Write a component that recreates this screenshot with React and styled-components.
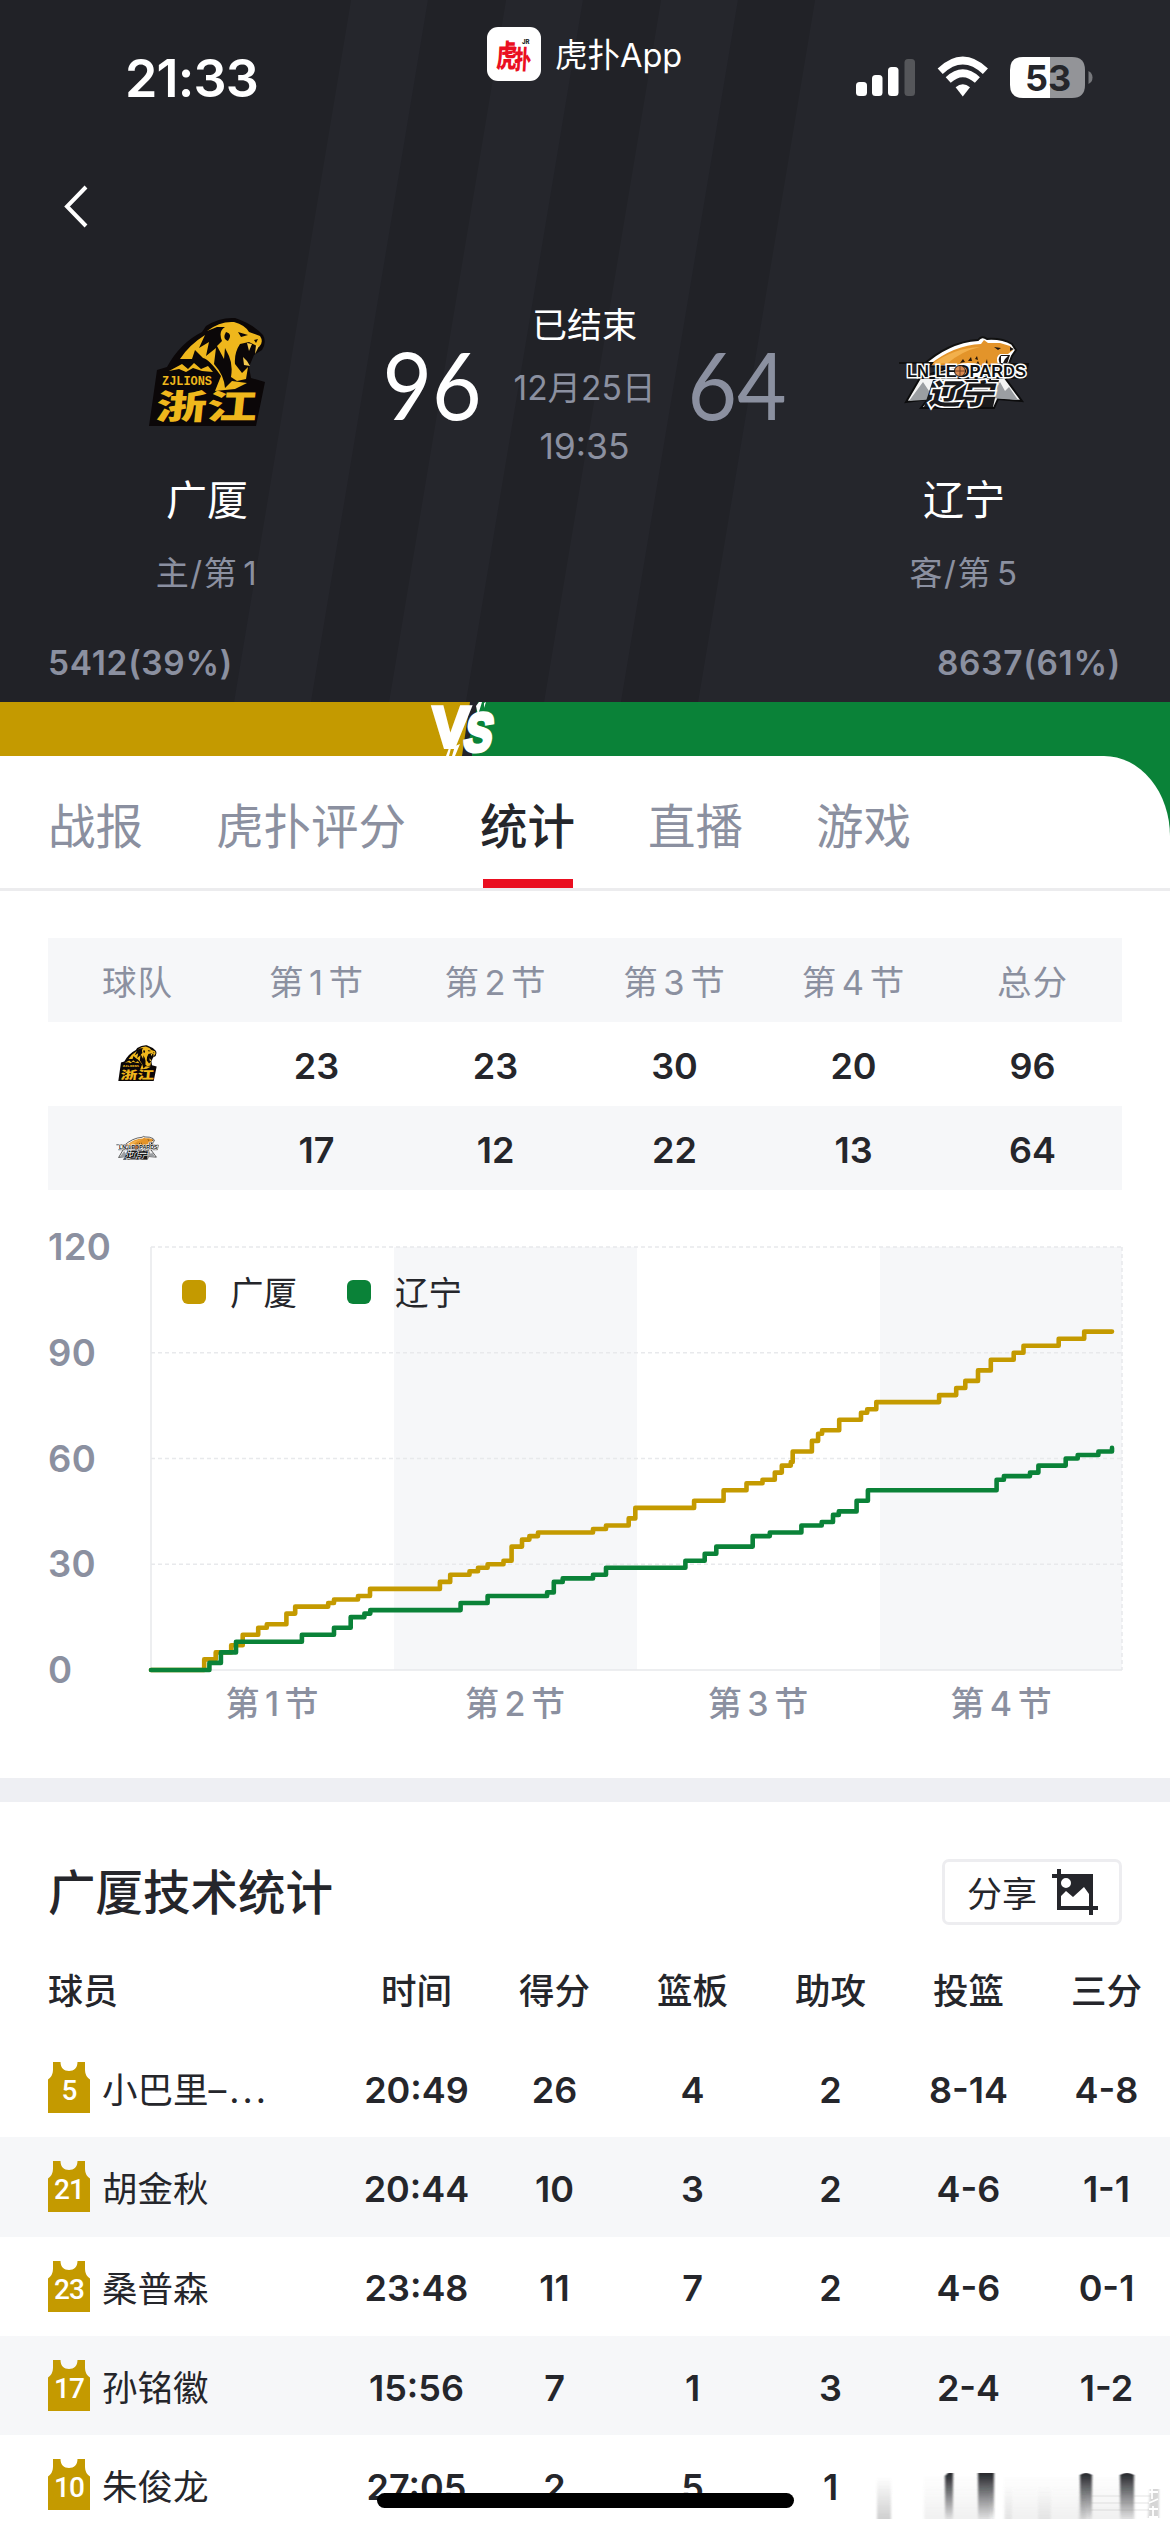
import styled, { createGlobalStyle } from "styled-components";

const GOLD = "#c49a00";
const GREEN = "#0a8238";
const GREY = "#8b90a0";
const INK = "#25262b";

const quarters = ["第1节", "第2节", "第3节", "第4节"];

const quarterScores = [
  { team: "zj", scores: [23, 23, 30, 20, 96] },
  { team: "ln", scores: [17, 12, 22, 13, 64] },
];

const tabs = ["战报", "虎扑评分", "统计", "直播", "游戏"];

const statColumns = ["时间", "得分", "篮板", "助攻", "投篮", "三分"];

const players = [
  { no: 5, name: "小巴里", tail: "–...", stats: ["20:49", "26", "4", "2", "8-14", "4-8"] },
  { no: 21, name: "胡金秋", stats: ["20:44", "10", "3", "2", "4-6", "1-1"] },
  { no: 23, name: "桑普森", stats: ["23:48", "11", "7", "2", "4-6", "0-1"] },
  { no: 17, name: "孙铭徽", stats: ["15:56", "7", "1", "3", "2-4", "1-2"] },
  { no: 10, name: "朱俊龙", stats: ["27:05", "2", "5", "1", "", ""] },
];

// [x, score] : the score changes at x
const goldSteps = [
  [151, 0], [204.2, 3], [215.7, 5], [231.2, 7], [242.7, 10], [258.2, 12], [266.8, 13], [286.4, 16], [295.2, 18],
  [328.2, 19], [334, 20], [358, 21], [370, 23], [439.9, 25], [450.2, 27], [469.5, 28], [478, 29], [487.6, 30],
  [503.5, 31], [511.6, 35], [522, 37], [529.4, 38], [538, 39], [593, 40], [606, 41], [628.7, 43], [635.3, 46],
  [694.1, 48], [723.6, 51], [746.5, 53], [762.5, 54], [774.8, 56], [781.8, 58], [790.8, 59], [792.7, 62],
  [811.9, 65], [818.1, 67], [822.1, 68], [839.2, 71], [861, 73], [867.2, 74], [876.3, 76], [939.1, 78],
  [956.2, 80], [965.3, 82], [978, 85], [990.8, 88], [1013.7, 90], [1023.5, 92], [1058.7, 94], [1084.2, 96],
  [1112, 96],
];
const greenSteps = [
  [151, 0], [209.4, 2], [220.9, 5], [236, 8], [301.9, 10], [334, 12], [350.7, 15], [364.4, 16], [370.3, 17],
  [460.6, 19], [487.6, 21], [547.1, 22], [553.8, 25], [562.7, 26], [593, 27], [606, 29], [685.4, 31],
  [704.7, 33], [716.3, 35], [752.7, 38], [769.8, 39], [801.4, 41], [821.7, 42], [833, 44], [838.8, 45],
  [856.6, 48], [867.9, 51], [996.6, 54], [1003.9, 55], [1030, 56], [1038.4, 58], [1065.7, 60], [1077.7, 61],
  [1098.4, 62], [1112, 63],
];

const stepPath = (steps) =>
  steps
    .map(([x, v], i) => {
      const px = x - 147;
      const py = (427 - v * 3.525).toFixed(1);
      return i === 0 ? `M${px} ${py}` : `H${px.toFixed(1)} V${py}`;
    })
    .join(" ");

// 第1节 -> 第 + <Digit>1</Digit> + 节
const withDigits = (text) => text.split(/(\d+)/).map((part, i) => (i % 2 ? <Digit key={i}>{part}</Digit> : part));

const LionLogo = ({ width }) => (
  <LogoSvg width={width} viewBox="0 0 118 112">
    <path
      d="M1 109 L9 53 L19 50 Q32 26 54 15 L58 9 Q72 0 87 1 Q105 7 115 18 Q119 25 114 33 L106 38 L101 50 L103 61 L117 65 L108 109 Z"
      fill="#0b0708"
    />
    <path
      d="M32 42 Q41 28 57 18 L51 31 L61 25 L58 39 L68 31 L66 47 Q76 58 77 71 L84 64 L99 66 L87 72 L67 74 L73 59 Q61 42 55 41 L47 33 L44 42 Z"
      fill="#efb71c"
    />
    <path
      d="M59 14 Q72 4 86 5 Q97 8 101 15 L112 19 Q116 25 111 30 L101 25 L92 27 Q86 36 87 47 L94 56 L100 50 L98 62 L89 64 L83 60 Q85 48 81 39 L77 31 L76 42 L69 29 L74 24 Q70 14 77 10 L69 10 Z"
      fill="#efb71c"
    />
    <path d="M78 15 Q85 17 80 24 Q74 22 78 15 M90 15 L100 18 L93 20 Z M106 23 L110 22 L108 26 Z" fill="#0b0708" />
    <path d="M99 26 L101 34 L104 27 Z M108 28 L107 37 L111 29 Z M95 40 L96 48 L102 49 L99 44 Z" fill="#f4c94d" />
    <path d="M21 54 L34 47 L40 52 L46 46 L53 52 L60 49 L65 55 L54 54 L45 51 L38 55 L31 52 Z" fill="#efb71c" />
    <text x="14" y="68" fontFamily="Liberation Mono" fontWeight="700" fontSize="12.5" textLength="50" lengthAdjust="spacingAndGlyphs" fill="#efb71c">
      ZJLIONS
    </text>
    <g transform="translate(7 102) skewX(-6)">
      <text x="0" y="0" fontFamily="Noto Sans CJK SC" fontWeight="900" fontSize="34" textLength="101" lengthAdjust="spacingAndGlyphs" fill="#efb71c">
        浙江
      </text>
    </g>
  </LogoSvg>
);

const LeopardLogo = ({ width }) => (
  <LogoSvg width={width} viewBox="0 0 132 74">
    <path d="M8 66 L22 42 L52 31 L104 38 L124 65 L100 63 L96 72 L23 72 L30 63 Z" fill="#f4f4f4" stroke="#0c0c0d" strokeWidth="2" />
    <path d="M11 65 L25 46 L31 55 L35 49 L39 63 Z M92 62 L102 46 L107 55 L111 51 L120 64 Z" fill="#9b9ea2" />
    <path
      d="M24 30 Q50 6 80 4 Q84 -1 89 3 Q104 2 114 8 L118 14 L114 20 L110 30 L91 30 L92 43 L78 31 Z"
      fill="#fff"
      stroke="#111"
      strokeWidth="2"
    />
    <path d="M31 29 Q56 9 83 8 L86 4 L90 7 L102 7 L112 10 L115 14 L110 18 L102 18 Q97 21 100 28 L94 28 L92 39 L82 29 Q70 25 58 29 Z" fill="#e3942a" />
    <path d="M34 28 Q56 12 82 11 Q64 15 50 27 Z" fill="#f2b04c" />
    <path d="M62 27 l3 -4 2 3z M70 25 l3 -4 1 4z M77 23 l2 -3 1 4z M86 31 l3 -8 1 7z M78 28 l2 -3 2 4z M88 36 l2 -6 1 6z" fill="#241408" />
    <path d="M96 11 L103 12 L100 14 Z M112 11 L116 13 L112 15 Z M103 19 L112 19 L109 28 L102 28 Q99 22 103 19 Z" fill="#1a1412" />
    <path d="M103 20 L110 20 L107 23 L105 27 L103 27 Z" fill="#fff" />
    <path d="M1 27 H34 L30 33 M104 28 H130 L127 42 H8 Z" fill="none" stroke="#111" strokeWidth="2" />
    <text
      x="9"
      y="41"
      fontFamily="Liberation Sans"
      fontWeight="700"
      fontSize="16.5"
      wordSpacing="2"
      textLength="119"
      lengthAdjust="spacingAndGlyphs"
      fill="#111"
      stroke="#fff"
      strokeWidth="3"
      paintOrder="stroke"
    >
      LN LEOPARDS
    </text>
    <circle cx="62" cy="35" r="5.5" fill="#d98a51" stroke="#111" strokeWidth="1" />
    <path d="M57 35 H67 M62 30 V40" stroke="#603117" strokeWidth="0.8" />
    <path d="M35 44 H101 L95 71 H26 Z" fill="#1a1a1c" />
    <g transform="translate(30 68) skewX(-14)">
      <text
        x="0"
        y="0"
        fontFamily="Noto Sans CJK SC"
        fontWeight="900"
        fontSize="28"
        textLength="66"
        lengthAdjust="spacingAndGlyphs"
        fill="#1a1a1c"
        stroke="#fff"
        strokeWidth="3.2"
        paintOrder="stroke"
      >
        辽宁
      </text>
    </g>
  </LogoSvg>
);

const HupuLogo = () => (
  <HupuBadge>
    <svg width="54" height="54" viewBox="0 0 54 54">
      <g transform="translate(9 40) skewX(-3) scale(0.66 1)">
        <text x="0" y="0" fontFamily="Noto Sans CJK SC" fontWeight="900" fontSize="31" fill="#ea1022">
          虎
        </text>
        <text x="27" y="2" fontFamily="Noto Sans CJK SC" fontWeight="900" fontSize="26" fill="#ea1022">
          扑
        </text>
      </g>
      <text x="35" y="17" fontFamily="Inter" fontWeight="800" fontSize="6" fill="#222">
        JR
      </text>
    </svg>
  </HupuBadge>
);

const StatusIcons = () => (
  <svg width="240" height="48" viewBox="0 0 240 48">
    <rect x="3" y="29" width="11" height="14" rx="3.5" fill="#fff" />
    <rect x="19" y="22" width="10.5" height="21" rx="3.5" fill="#fff" />
    <rect x="35" y="14" width="10.5" height="29" rx="3.5" fill="#fff" />
    <rect x="51.5" y="6" width="10.5" height="37" rx="3.5" fill="#55565a" />
    <g fill="none" stroke="#fff" strokeWidth="7.4">
      <path d="M87.2 18.2 Q109.8 -3.2 132.4 18.2" />
      <path d="M95.2 27 Q109.8 13.5 124.4 27" />
    </g>
    <path d="M102.6 34.2 Q109.8 28.5 117 34.2 L109.8 43.6 Z" fill="#fff" />
    <path d="M170 4 H197 V45 H170 Q157 45 157 32 V17 Q157 4 170 4 Z" fill="#fff" />
    <path d="M197 4 H219 Q232 4 232 17 V32 Q232 45 219 45 H197 Z" fill="#939498" />
    <path d="M235.5 18 Q239.5 20 239.5 24.5 Q239.5 29 235.5 31 Z" fill="#77787c" />
    <text x="195" y="37.5" textAnchor="middle" fontFamily="Inter" fontWeight="700" fontSize="36" fill="#25262b">
      53
    </text>
  </svg>
);

const VsMark = () => (
  <VsSvg width="82" height="54" viewBox="0 0 82 54">
    <path d="M0 0 H48 L40 54 H0 Z" fill={GOLD} />
    <path d="M46 0 L58 0 L52 54 H38 Z" fill="#22232a" />
    <path d="M54 0 H82 V54 H48 L48 48 L42 48 L50 20 Z" fill={GREEN} />
    <path d="M52 4 L55 0 L58 0 L54 13 Z M60 1 L62 0 L60 6 Z M22 54 L25 46 L27 46 L25 54 Z M28 54 L31 44 L36 42 L31 54 Z" fill="#fff" />
    <g fill="#fff" stroke="#fff" fontFamily="Liberation Sans" fontWeight="700">
      <text transform="translate(7 45) skewX(-3)" fontSize="58" strokeWidth="4" textLength="37" lengthAdjust="spacingAndGlyphs">
        V
      </text>
      <text transform="translate(38 49) skewX(-10)" fontSize="54" strokeWidth="4" textLength="28" lengthAdjust="spacingAndGlyphs">
        S
      </text>
    </g>
  </VsSvg>
);

const ShareIcon = () => (
  <svg width="46" height="46" viewBox="0 0 46 46" fill={INK}>
    <path
      fillRule="evenodd"
      d="M5 0 H9 V5 H41 V37 H46 V41 H41 V46 H37 V41 H5 V9 H0 V5 H5 Z M9 27 V37 H37 V25 L32 18 L21 28 L14 22 Z M14 9 A5 5 0 1 0 14 19 A5 5 0 1 0 14 9 Z"
    />
  </svg>
);

const Jersey = ({ no }) => (
  <JerseyBox>
    <svg width="42" height="51" viewBox="0 0 42 51">
      <path
        d="M5 0 H12.5 C12.5 6 16 9 21 9 C26 9 29.5 6 29.5 0 H37 V7 C37 12 38.5 15 42 17.5 V51 H0 V17.5 C3.5 15 5 12 5 7 Z"
        fill={GOLD}
      />
    </svg>
    <JerseyNo>{no}</JerseyNo>
  </JerseyBox>
);

const ScoreChart = () => (
  <ChartRow>
    <YAxis>
      {[120, 90, 60, 30, 0].map((v) => (
        <span key={v}>{v}</span>
      ))}
    </YAxis>
    <Plot>
      <svg width="979" height="431" viewBox="0 0 979 431">
        <rect x="247" y="4" width="243" height="423" fill="#f6f7f9" />
        <rect x="733" y="4" width="242" height="423" fill="#f6f7f9" />
        <g stroke="#e8e9ec" strokeWidth="1.5" fill="none">
          <path d="M4 4 H975 M4 109.7 H975 M4 215.5 H975 M4 321.2 H975 M975 4 V427" strokeDasharray="4 3" />
          <path d="M4 4 V427 H975" />
        </g>
        <g fill="none" strokeWidth="4.6" strokeLinecap="round" strokeLinejoin="round">
          <path d={stepPath(goldSteps)} stroke={GOLD} />
          <path d={stepPath(greenSteps)} stroke={GREEN} />
        </g>
      </svg>
      <Legend>
        <LegendDot $color={GOLD} />
        <LegendName>广厦</LegendName>
        <LegendDot $color={GREEN} />
        <LegendName>辽宁</LegendName>
      </Legend>
      <XAxis>
        {quarters.map((q) => (
          <span key={q}>{withDigits(q)}</span>
        ))}
      </XAxis>
    </Plot>
  </ChartRow>
);

export default function App() {
  return (
    <Page>
      <GlobalStyle />
      <Header>
        <Stripes viewBox="0 0 1170 702" preserveAspectRatio="none">
          <path
            d="M351 0 H428 L311 702 H234 Z M506 0 H583 L466 702 H389 Z M661 0 H738 L621 702 H544 Z M815 0 H1170 V702 H698 Z"
            fill="#25262c"
          />
        </Stripes>
        <StatusBar>
          <Clock>21:33</Clock>
          <Brand>
            <HupuLogo />
            <BrandName>虎扑App</BrandName>
          </Brand>
          <StatusRight>
            <StatusIcons />
          </StatusRight>
        </StatusBar>
        <NavBar>
          <svg width="26" height="46" viewBox="0 0 26 46">
            <path d="M24 3 L5 22.5 L24 42" fill="none" stroke="#fff" strokeWidth="4" />
          </svg>
        </NavBar>
        <Match>
          <Team>
            <LogoBox>
              <LionLogo width={118} />
            </LogoBox>
            <TeamName>广厦</TeamName>
            <TeamRank>主/第<RankNo>1</RankNo></TeamRank>
          </Team>
          <Score $color="#fff">96</Score>
          <MatchInfo>
            <MatchState>已结束</MatchState>
            <MatchDate>12月25日</MatchDate>
            <MatchTime>19:35</MatchTime>
          </MatchInfo>
          <Score $color={GREY}>64</Score>
          <Team $away>
            <LogoBox>
              <LeopardLogo width={132} />
            </LogoBox>
            <TeamName>辽宁</TeamName>
            <TeamRank>客/第<RankNo>5</RankNo></TeamRank>
          </Team>
        </Match>
        <Votes>
          <span>5412(39%)</span>
          <span>8637(61%)</span>
        </Votes>
      </Header>
      <VoteBar>
        <VoteHome />
        <VsMark />
        <VoteAway />
      </VoteBar>
      <SheetBack>
        <TabBar>
          {tabs.map((t) => (
            <Tab key={t} $active={t === "统计"}>
              {t}
            </Tab>
          ))}
        </TabBar>
      </SheetBack>
      <Summary>
        <QuarterRow $shade>
          {["球队", ...quarters, "总分"].map((h) => (
            <QuarterHead key={h}>{withDigits(h)}</QuarterHead>
          ))}
        </QuarterRow>
        {quarterScores.map((row, idx) => (
          <QuarterRow key={row.team} $shade={idx % 2 === 1}>
            <QuarterLogo>{row.team === "zj" ? <LionLogo width={39} /> : <LeopardLogo width={43} />}</QuarterLogo>
            {row.scores.map((s, i) => (
              <QuarterCell key={i}>{s}</QuarterCell>
            ))}
          </QuarterRow>
        ))}
        <ScoreChart />
      </Summary>
      <Divider />
      <StatsHeader>
        <StatsTitle>广厦技术统计</StatsTitle>
        <ShareButton>
          分享
          <ShareIcon />
        </ShareButton>
      </StatsHeader>
      <StatsHeadRow>
        <PlayerCell>球员</PlayerCell>
        {statColumns.map((c) => (
          <StatHead key={c}>{c}</StatHead>
        ))}
      </StatsHeadRow>
      {players.map((p, idx) => (
        <StatsRow key={p.no} $shade={idx % 2 === 1}>
          <PlayerCell>
            <Jersey no={p.no} />
            <PlayerName>
              {p.name}
              {p.tail && <NameTail>{p.tail}</NameTail>}
            </PlayerName>
          </PlayerCell>
          {p.stats.map((s, i) => (
            <StatCell key={i}>{s}</StatCell>
          ))}
        </StatsRow>
      ))}
      <Smear viewBox="0 0 320 62">
        <defs>
          <linearGradient id="fadeDown" x1="0" y1="0" x2="0" y2="1">
            <stop offset="0" stopColor="#25262b" />
            <stop offset="1" stopColor="#25262b" stopOpacity="0.08" />
          </linearGradient>
          <linearGradient id="fadeUp" x1="0" y1="0" x2="0" y2="1">
            <stop offset="0" stopColor="#777" stopOpacity="0" />
            <stop offset="1" stopColor="#777" stopOpacity="0.35" />
          </linearGradient>
          <filter id="soft" x="-20%" y="-20%" width="140%" height="140%">
            <feGaussianBlur stdDeviation="1 0.5" />
          </filter>
        </defs>
        <g filter="url(#soft)">
          <path d="M27 12 H41 V54 H27 Z" fill="url(#fadeUp)" />
          <path d="M74 10 H140 V54 H74 Z M154 12 H285 V54 H154 Z" fill="url(#fadeUp)" opacity="0.3" />
          <path d="M155 20 H162 V54 H155 Z M188 20 H201 V54 H188 Z M228 20 H236 V54 H228 Z" fill="url(#fadeUp)" opacity="0.3" />
          <path d="M95 11 L98 8 H103 V54 H95 Z" fill="url(#fadeDown)" />
          <path d="M128 8 H144 V54 H128 Z" fill="url(#fadeDown)" />
          <path d="M230 10 Q236 6 242 10 V54 H230 Z" fill="url(#fadeDown)" />
          <path d="M270 10 Q277 6 284 10 V54 H270 Z" fill="url(#fadeDown)" />
          <path d="M232 31 H300 M240 38 H302 M240 45 H300" stroke="#888" strokeOpacity="0.12" strokeWidth="2" />
          <path d="M300 24 H309 V53 H298 Z" fill="#999" fillOpacity="0.4" />
        </g>
        <path d="M299 27 H308 M302 24 V34 M299 38 L308 34 M299 44 H308 M303 41 V52 M299 52 H308" stroke="#fff" strokeWidth="1.8" fill="none" />
      </Smear>
      <HomeIndicator />
    </Page>
  );
}

const GlobalStyle = createGlobalStyle`
  * {
    box-sizing: border-box;
  }
  body {
    margin: 0;
    background: #fff;
    font-family: Inter, "Noto Sans CJK SC", sans-serif;
    color: ${INK};
  }
  svg {
    display: block;
    flex: none;
  }
`;

const Page = styled.div`
  position: relative;
  width: 1170px;
  height: 2532px;
  overflow: hidden;
  background: #fff;
`;

const Digit = styled.span`
  margin: 0 4.5px;
`;

const LogoSvg = styled.svg`
  overflow: visible;
`;

const Header = styled.header`
  position: relative;
  height: 702px;
  background: #212227;
  color: #fff;
`;

const Stripes = styled.svg`
  position: absolute;
  inset: 0;
  width: 100%;
  height: 100%;
`;

const StatusBar = styled.div`
  position: relative;
  display: grid;
  grid-template-columns: 487px 1fr 317px;
  height: 150px;
`;

const Clock = styled.div`
  padding: 48px 0 0 125px;
  font-size: 52px;
  font-weight: 600;
  line-height: 62px;
  letter-spacing: -0.8px;
`;

const Brand = styled.div`
  display: flex;
  align-items: center;
  gap: 14px;
  height: 54px;
  margin-top: 27px;
  font-size: 32.5px;
`;

const BrandName = styled.span`
  padding-bottom: 3px;
`;

const HupuBadge = styled.div`
  width: 54px;
  height: 54px;
  border-radius: 11px;
  background: #fff;
`;

const StatusRight = styled.div`
  padding-top: 53px;
`;

const NavBar = styled.nav`
  position: relative;
  display: flex;
  align-items: center;
  height: 114px;
  padding-left: 62px;
`;

const Match = styled.section`
  position: relative;
  display: grid;
  grid-template-columns: 270px 152px 153px 152px 270px;
  height: 340px;
  padding: 24px 86px 0;
`;

const Team = styled.div`
  width: 240px;
  margin-left: ${(p) => (p.$away ? "31px" : "1px")};
  text-align: center;
`;

const LogoBox = styled.div`
  display: flex;
  align-items: center;
  justify-content: center;
  height: 170px;
`;

const TeamName = styled.div`
  font-size: 41px;
  line-height: 84px;
`;

const TeamRank = styled.div`
  font-size: 33px;
  line-height: 63px;
  letter-spacing: 1.5px;
  color: ${GREY};
`;

const RankNo = styled.span`
  margin-left: 5px;
`;

const Score = styled.div`
  width: 152px;
  padding-top: 46px;
  font-family: Lato, sans-serif;
  font-size: 94px;
  line-height: 100px;
  text-align: center;
  color: ${(p) => p.$color};
  transform: scaleX(0.91);
`;

const MatchInfo = styled.div`
  padding-top: 6px;
  text-align: center;
  white-space: nowrap;
  color: ${GREY};
`;

const MatchState = styled.div`
  font-size: 35px;
  line-height: 62px;
  color: #fff;
`;

const MatchDate = styled.div`
  padding-top: 2px;
  font-size: 33.5px;
  line-height: 60px;
`;

const MatchTime = styled.div`
  font-size: 35.5px;
  line-height: 58px;
`;

const Votes = styled.div`
  position: relative;
  display: flex;
  justify-content: space-between;
  padding: 36px 49px 0 48px;
  font-size: 33.5px;
  font-weight: 600;
  line-height: 46px;
  letter-spacing: 0.7px;
  color: ${GREY};
`;

const VoteBar = styled.div`
  display: flex;
  height: 54px;
`;

const VsSvg = styled.svg`
  position: relative;
  overflow: visible;
`;

const VoteHome = styled.div`
  width: 424px;
  background: ${GOLD};
`;

const VoteAway = styled.div`
  flex: 1;
  background: ${GREEN};
`;

const SheetBack = styled.div`
  background: ${GREEN};
`;

const TabBar = styled.div`
  display: flex;
  gap: 72px;
  height: 135px;
  padding-left: 48px;
  border-bottom: 3px solid #ececee;
  border-top-right-radius: 66px 80px;
  background: #fff;
`;

const Tab = styled.div`
  display: flex;
  flex-direction: column;
  justify-content: space-between;
  width: ${(p) => p.children.length * 48}px;
  padding-top: 36px;
  font-size: 47.5px;
  line-height: 70px;
  white-space: nowrap;
  font-weight: ${(p) => (p.$active ? 500 : 400)};
  color: ${(p) => (p.$active ? INK : GREY)};

  &::after {
    content: "";
    width: 90px;
    height: 9px;
    margin-left: 3px;
    background: ${(p) => (p.$active ? "#ea0e20" : "transparent")};
  }
`;

const Summary = styled.section`
  height: 887px;
  padding: 47px 48px 0;
`;

const QuarterRow = styled.div`
  display: grid;
  grid-template-columns: repeat(6, 179px);
  align-items: center;
  height: 84px;
  background: ${(p) => (p.$shade ? "#f6f7f9" : "#fff")};
`;

const QuarterHead = styled.div`
  font-size: 34.5px;
  letter-spacing: 1px;
  text-align: center;
  color: ${GREY};
`;

const QuarterLogo = styled.div`
  display: flex;
  justify-content: center;
`;

const QuarterCell = styled.div`
  padding-top: 3px;
  font-size: 36px;
  font-weight: 600;
  text-align: center;
`;

const ChartRow = styled.div`
  display: flex;
  margin-top: 53px;
`;

const YAxis = styled.div`
  display: flex;
  flex: none;
  flex-direction: column;
  justify-content: space-between;
  width: 99px;
  height: 463px;
  margin-top: -16px;
  font-size: 36.5px;
  line-height: 40px;
  font-weight: 600;
  letter-spacing: 0.3px;
  color: ${GREY};
`;

const Plot = styled.div`
  position: relative;
`;

// drawn over the plot area
const Legend = styled.div`
  position: absolute;
  top: 24px;
  left: 35px;
  display: flex;
  align-items: center;
  height: 50px;
`;

const LegendDot = styled.i`
  width: 24px;
  height: 24px;
  border-radius: 6px;
  background: ${(p) => p.$color};
`;

const LegendName = styled.span`
  width: 141px;
  padding: 0 0 3px 24px;
  font-size: 33.5px;
`;

const XAxis = styled.div`
  display: grid;
  grid-template-columns: repeat(4, 243px);
  padding-left: 4px;
  font-size: 34px;
  line-height: 60px;
  font-weight: 500;
  letter-spacing: 1px;
  text-align: center;
  color: ${GREY};
`;

const Divider = styled.div`
  height: 24px;
  background: #eeeff3;
`;

const StatsHeader = styled.div`
  display: flex;
  align-items: center;
  justify-content: space-between;
  height: 140px;
  padding: 39px 48px 0;
`;

const StatsTitle = styled.h2`
  margin: 0;
  padding-bottom: 4px;
  font-size: 47.5px;
  font-weight: 500;
`;

const ShareButton = styled.button`
  display: flex;
  align-items: center;
  gap: 15px;
  width: 180px;
  height: 66px;
  padding: 0 0 0 22px;
  border: 3px solid #ededf0;
  border-radius: 7px;
  background: #fff;
  color: ${INK};
  font-family: inherit;
  font-size: 35px;
`;

const StatsRow = styled.div`
  display: grid;
  grid-template-columns: 347.5px repeat(6, 138px);
  align-items: center;
  height: 99.3px;
  background: ${(p) => (p.$shade ? "#f6f7f9" : "#fff")};
`;

const StatsHeadRow = styled(StatsRow)`
  height: 96px;
  padding-bottom: 3px;
`;

const PlayerCell = styled.div`
  display: flex;
  align-items: center;
  padding-left: 48px;
  font-size: 35px;
  font-weight: 500;
`;

const PlayerName = styled.div`
  padding-left: 12px;
  font-size: 35.5px;
  font-weight: 400;
  white-space: nowrap;
`;

const NameTail = styled.span`
  letter-spacing: 3px;
`;

const StatHead = styled.div`
  font-size: 35.5px;
  font-weight: 500;
  text-align: center;
`;

const StatCell = styled.div`
  padding-top: 4px;
  font-size: 36px;
  font-weight: 600;
  text-align: center;
`;

const JerseyBox = styled.div`
  position: relative;
  width: 42px;
  height: 51px;
`;

const JerseyNo = styled.div`
  position: absolute;
  top: 14px;
  left: 0;
  width: 42px;
  font-family: Roboto, sans-serif;
  font-size: 28px;
  line-height: 30px;
  letter-spacing: -1px;
  text-align: center;
  color: #fff;
`;

const Smear = styled.svg`
  position: absolute;
  right: 0;
  bottom: 5px;
  width: 320px;
  height: 62px;
`;

const HomeIndicator = styled.div`
  position: absolute;
  bottom: 24px;
  left: 377px;
  width: 417px;
  height: 15px;
  border-radius: 8px;
  background: #000;
`;
